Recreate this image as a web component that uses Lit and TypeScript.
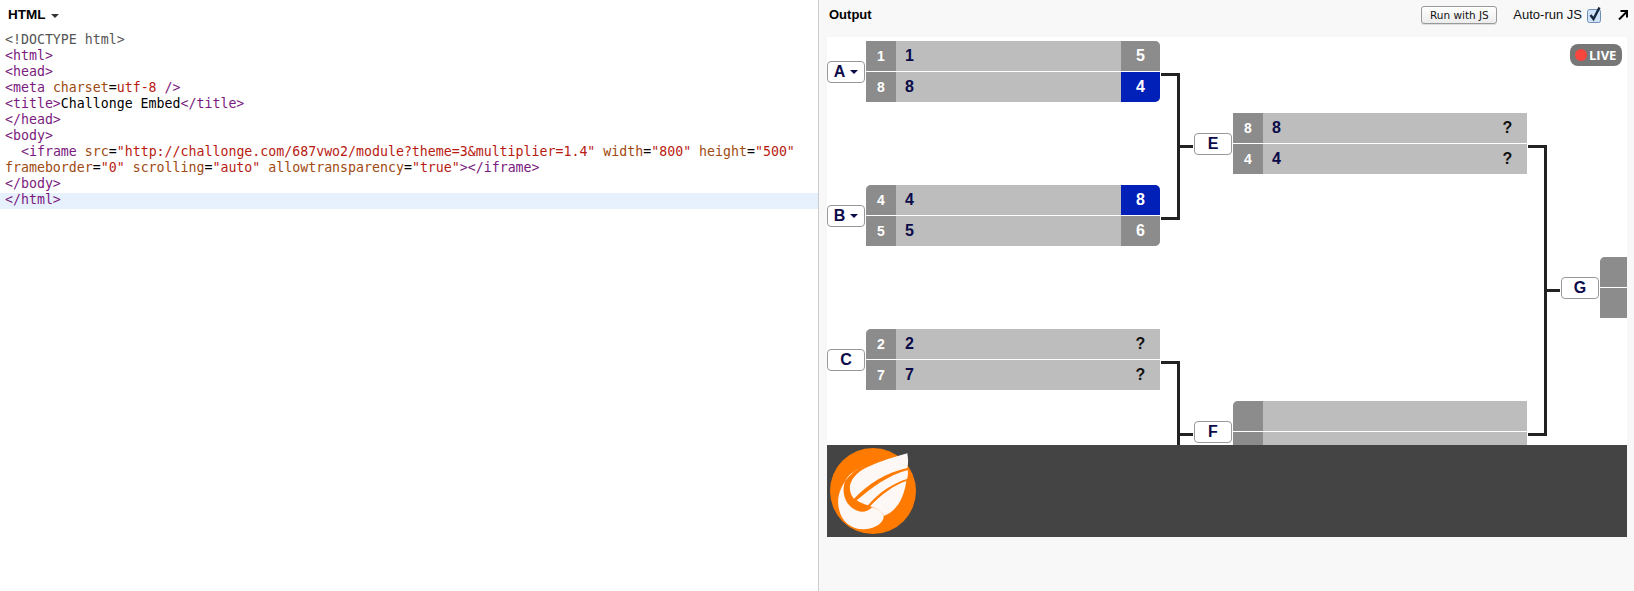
import { LitElement, html, css, svg } from "lit";
import { customElement } from "lit/decorators.js";

type Row = { seed: string; name: string; score: string; win?: boolean; plain?: boolean };
type Match = { x: number; y: number; w?: number; corners: string; rows: [Row, Row] };
type Label = { x: number; y: number; text: string; caret?: boolean };

const matches: Match[] = [
  { x: 39, y: 4, corners: "0 5px 5px 0", rows: [{ seed: "1", name: "1", score: "5" }, { seed: "8", name: "8", score: "4", win: true }] },
  { x: 39, y: 148, corners: "5px 5px 5px 0", rows: [{ seed: "4", name: "4", score: "8", win: true }, { seed: "5", name: "5", score: "6" }] },
  { x: 39, y: 292, corners: "5px 0 0 0", rows: [{ seed: "2", name: "2", score: "?", plain: true }, { seed: "7", name: "7", score: "?", plain: true }] },
  { x: 406, y: 76, corners: "0", rows: [{ seed: "8", name: "8", score: "?", plain: true }, { seed: "4", name: "4", score: "?", plain: true }] },
  { x: 406, y: 364, corners: "5px 0 0 0", rows: [{ seed: "", name: "", score: "", plain: true }, { seed: "", name: "", score: "", plain: true }] },
  { x: 773, y: 220, corners: "5px 0 0 0", rows: [{ seed: "", name: "", score: "" }, { seed: "", name: "", score: "" }] },
];

const labels: Label[] = [
  { x: 0, y: 24, text: "A", caret: true },
  { x: 0, y: 168, text: "B", caret: true },
  { x: 0, y: 312, text: "C" },
  { x: 367, y: 96, text: "E" },
  { x: 367, y: 384, text: "F" },
  { x: 734, y: 240, text: "G" },
];

const connectors = [
  "M334 37.5H351.5V181.5H334M351.5 109.5H366",
  "M334 325.5H351.5V408M351.5 397.5H366",
  "M701 109.5H718.5V397.5H701M718.5 253.5H733",
];

@customElement("app-root")
export class AppRoot extends LitElement {
  static styles = css`
    :host { display: flex; width: 1634px; height: 591px; background: #f8f8f8; overflow: hidden; font-family: "Liberation Sans", Arial, sans-serif; color: #000; }
    .left { width: 818px; background: #fff; border-right: 1px solid #ccc; flex: none; }
    .pane-title { font-weight: bold; font-size: 13.5px; height: 33px; padding: 0 0 4px 8px; box-sizing: border-box; display: flex; align-items: center; gap: 5px; }
    .caret { width: 0; height: 0; border: 4px solid transparent; border-top-color: #333; border-bottom: 0; margin-top: 2px; }
    .code { font-family: "DejaVu Sans Mono", monospace; font-size: 13.26px; line-height: 14px; color: #000; }
    .line { height: 16px; padding-left: 5px; white-space: pre; }
    .line.active { background: #e6f1fd; }
    .doc { color: #555; }
    .tag { color: #7a1a7e; }
    .attr { color: #a04a10; }
    .str { color: #b81a10; }
    .right { flex: 1; min-width: 0; display: flex; flex-direction: column; }
    .bar { height: 37px; display: flex; align-items: center; padding: 0 6px 8px 10px; box-sizing: border-box; flex: none; }
    .bar .title { font-weight: bold; font-size: 13px; }
    .spacer { flex: 1; }
    .run { width: 76px; height: 18px; box-sizing: border-box; border: 1px solid #999; border-radius: 3px; background: linear-gradient(#fff, #ececec); font-family: "DejaVu Sans", sans-serif; font-size: 10.5px; line-height: 16px; text-align: center; color: #111; margin-right: 16px; box-shadow: 0 1px 0 #ddd; }
    .auto { font-size: 13px; margin-right: 5px; color: #111; }
    .check { width: 15px; height: 16px; margin-right: 16px; display: block; }
    .arrow { width: 10px; height: 10px; display: block; }
    .stage { position: relative; margin-left: 8px; width: 800px; height: 408px; background: #fff; overflow: hidden; flex: none; }
    .wires { position: absolute; left: 0; top: 0; width: 800px; height: 408px; }
    .match { position: absolute; width: 294px; height: 61px; overflow: hidden; display: flex; flex-direction: column; gap: 1px; }
    .row { flex: 1; display: flex; background: #bdbdbd; align-items: center; font-weight: bold; }
    .seed { width: 30px; align-self: stretch; background: #8c8c8c; color: #fff; font-size: 14px; display: flex; align-items: center; justify-content: center; flex: none; padding-bottom: 1px; box-sizing: border-box; }
    .name { flex: 1; padding: 0 0 1px 9px; font-size: 16px; color: #0b0b4a; }
    .score { width: 39px; align-self: stretch; display: flex; align-items: center; justify-content: center; font-size: 16px; color: #fff; background: #8c8c8c; flex: none; padding-bottom: 1px; box-sizing: border-box; }
    .score.win { background: #0020b8; }
    .score.plain { background: transparent; color: #111; }
    .label { position: absolute; width: 38px; height: 22px; box-sizing: border-box; background: #fff; border: 1px solid #999; border-radius: 4px; display: flex; align-items: center; justify-content: center; gap: 5px; font-weight: bold; font-size: 16px; color: #0b0b4a; padding-bottom: 1px; }
    .label i { width: 0; height: 0; border: 4px solid transparent; border-top-color: #0b0b4a; border-bottom: 0; }
    .live { position: absolute; left: 743px; top: 7px; width: 52px; height: 22px; border-radius: 8px; background: #777; display: flex; align-items: center; padding-left: 5px; box-sizing: border-box; gap: 2px; color: #fff; font-family: "Open Sans", sans-serif; font-weight: 700; font-size: 13px; }
    .dot { width: 12px; height: 12px; border-radius: 50%; background: #f9463f; flex: none; }
    .footer { margin-left: 8px; width: 800px; height: 92px; background: #444; flex: none; padding: 3px 0 0 3px; box-sizing: border-box; }
    .footer svg { display: block; width: 86px; height: 86px; }
  `;

  private iframeLine() {
    return html`  <span class="tag">&lt;iframe</span> <span class="attr">src</span>=<span class="str">"http://challonge.com/687vwo2/module?theme=3&amp;multiplier=1.4"</span> <span class="attr">width</span>=<span class="str">"800"</span> <span class="attr">height</span>=<span class="str">"500"</span>`;
  }

  private code() {
    const t = (s: string) => html`<div class="line"><span class="tag">${s}</span></div>`;
    return html`<div class="code">
      <div class="line"><span class="doc">&lt;!DOCTYPE html&gt;</span></div>
      ${t("<html>")}
      ${t("<head>")}
      <div class="line"><span class="tag">&lt;meta</span> <span class="attr">charset</span>=<span class="str">utf-8</span> <span class="tag">/&gt;</span></div>
      <div class="line"><span class="tag">&lt;title&gt;</span>Challonge Embed<span class="tag">&lt;/title&gt;</span></div>
      ${t("</head>")}
      ${t("<body>")}
      <div class="line">${this.iframeLine()}</div>
      <div class="line"><span class="attr">frameborder</span>=<span class="str">"0"</span> <span class="attr">scrolling</span>=<span class="str">"auto"</span> <span class="attr">allowtransparency</span>=<span class="str">"true"</span><span class="tag">&gt;&lt;/iframe&gt;</span></div>
      ${t("</body>")}
      <div class="line active"><span class="tag">&lt;/html&gt;</span></div>
    </div>`;
  }

  private match(m: Match) {
    return html`<div class="match" style="left:${m.x}px;top:${m.y}px;border-radius:${m.corners}">
      ${m.rows.map(r => html`<div class="row">
        <div class="seed">${r.seed}</div>
        <div class="name">${r.name}</div>
        <div class="score ${r.win ? "win" : ""} ${r.plain ? "plain" : ""}">${r.score}</div>
      </div>`)}
    </div>`;
  }

  private logo() {
    return html`<svg viewBox="0 0 258 258" aria-hidden="true">
      <circle cx="129" cy="129" r="129" fill="#ff7a00"/>
      <path fill="#fdf8f5" d="M232 16C190 28 150 40 120 54C92 64 66 86 60 112C58 130 64 144 72 152C112 110 170 72 232 60C236 46 234 30 232 16Z"/>
      <path fill="#fdf8f5" d="M233 66C176 80 124 120 80 157C90 164 104 170 114 172C146 134 188 106 231 93C234 84 235 74 233 66Z"/>
      <path fill="#fdf8f5" d="M229 99C190 112 154 140 120 175C144 183 160 192 161 204C200 190 222 150 229 99Z"/>
      <path fill="#fdf8f5" d="M106 54C50 72 20 130 25 172C30 222 66 246 104 244C140 240 162 222 161 204C160 192 144 183 126 178C108 198 78 194 58 172C42 154 34 122 48 94C58 76 84 62 106 54Z"/>
    </svg>`;
  }

  render() {
    return html`
      <div class="left">
        <div class="pane-title">HTML <span class="caret"></span></div>
        ${this.code()}
      </div>
      <div class="right">
        <div class="bar">
          <span class="title">Output</span>
          <span class="spacer"></span>
          <div class="run">Run with JS</div>
          <span class="auto">Auto-run JS</span>
          <svg class="check" viewBox="0 0 15 16">
            <rect x=".5" y="2.5" width="13" height="13" rx="2" fill="#cfe2f8" stroke="#6f8fb5"/>
            <path d="M3.5 8L6.5 12L12.5 .5" fill="none" stroke="#16263f" stroke-width="2.4"/>
          </svg>
          <svg class="arrow" viewBox="0 0 10 10">
            <path d="M1 9.5L8 2.5M2.5 1H9V7.5" fill="none" stroke="#000" stroke-width="2"/>
          </svg>
        </div>
        <div class="stage">
          <svg class="wires" viewBox="0 0 800 408">
            ${connectors.map(d => svg`<path d=${d} fill="none" stroke="#222" stroke-width="3"/>`)}
          </svg>
          ${matches.map(m => this.match(m))}
          ${labels.map(l => html`<div class="label" style="left:${l.x}px;top:${l.y}px">${l.text}${l.caret ? html`<i></i>` : ""}</div>`)}
          <div class="live"><span class="dot"></span>LIVE</div>
        </div>
        <div class="footer">${this.logo()}</div>
      </div>
    `;
  }
}
